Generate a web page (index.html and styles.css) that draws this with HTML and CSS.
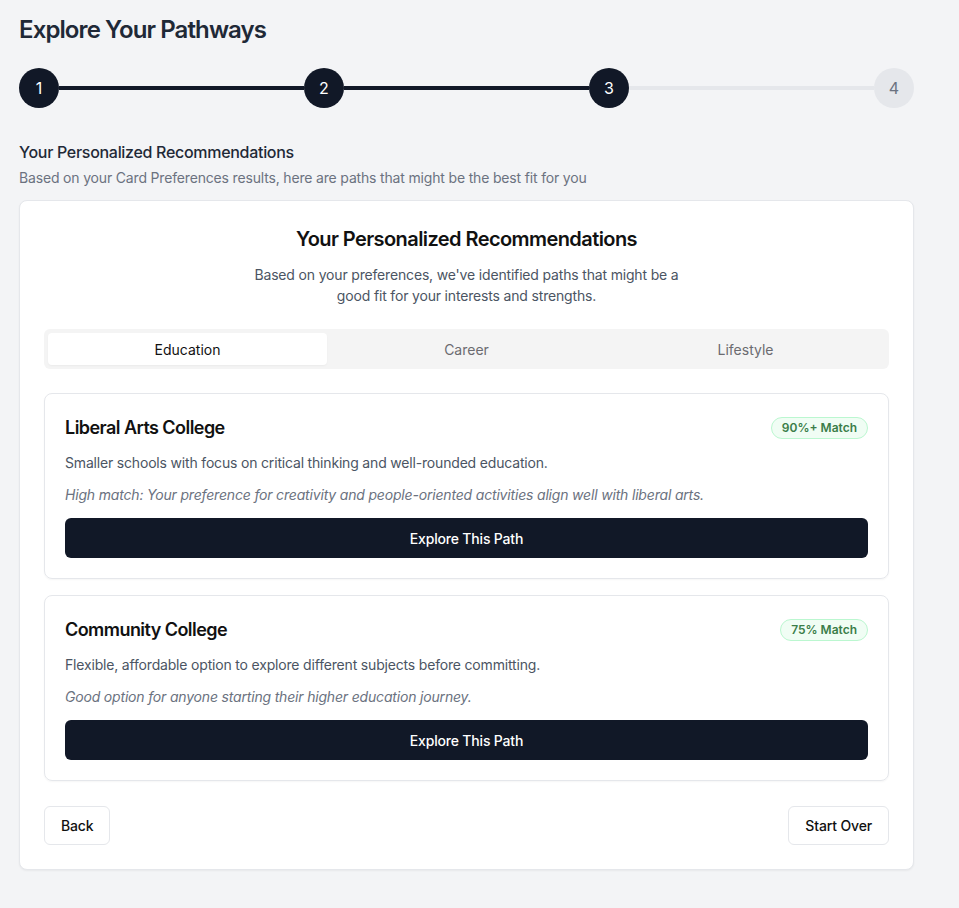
FILE: index.html
```html
<!DOCTYPE html>
<html lang="en">
<head>
<meta charset="utf-8">
<title>Explore Your Pathways</title>
<link rel="stylesheet" href="styles.css">
</head>
<body>
<main class="page">
  <h1 class="page-title">Explore Your Pathways</h1>

  <div class="stepper">
    <div class="step done">1</div>
    <div class="bar done"></div>
    <div class="step done">2</div>
    <div class="bar done"></div>
    <div class="step done">3</div>
    <div class="bar"></div>
    <div class="step">4</div>
  </div>

  <h2 class="section-title">Your Personalized Recommendations</h2>
  <p class="section-sub">Based on your Card Preferences results, here are paths that might be the best fit for you</p>

  <section class="panel">
    <h3 class="panel-title">Your Personalized Recommendations</h3>
    <p class="panel-sub">Based on your preferences, we've identified paths that might be a good fit for your interests and strengths.</p>

    <div class="tabs">
      <div class="tab active">Education</div>
      <div class="tab">Career</div>
      <div class="tab">Lifestyle</div>
    </div>

    <div class="cards">
      <article class="card">
        <div class="card-head">
          <h4 class="card-title">Liberal Arts College</h4>
          <span class="badge">90%+ Match</span>
        </div>
        <p class="card-desc">Smaller schools with focus on critical thinking and well-rounded education.</p>
        <p class="card-note">High match: Your preference for creativity and people-oriented activities align well with liberal arts.</p>
        <button class="btn-primary">Explore This Path</button>
      </article>

      <article class="card">
        <div class="card-head">
          <h4 class="card-title">Community College</h4>
          <span class="badge">75% Match</span>
        </div>
        <p class="card-desc">Flexible, affordable option to explore different subjects before committing.</p>
        <p class="card-note">Good option for anyone starting their higher education journey.</p>
        <button class="btn-primary">Explore This Path</button>
      </article>
    </div>

    <div class="actions">
      <button class="btn-outline">Back</button>
      <button class="btn-outline">Start Over</button>
    </div>
  </section>
</main>
</body>
</html>
```

FILE: styles.css
```css
* { box-sizing: border-box; }

html, body {
  margin: 0;
  padding: 0;
  background: #f3f4f6;
}

body {
  font-family: Inter, "Noto Sans", "Liberation Sans", sans-serif;
  color: #111827;
}

.page {
  width: 895px;
  margin-left: 19px;
  padding-top: 14px;
  padding-bottom: 38px;
}

.page-title {
  margin: 0;
  font-size: 24px;
  line-height: 32px;
  font-weight: 600;
  letter-spacing: -0.9px;
  color: #1f2937;
}

.stepper {
  display: flex;
  align-items: center;
  margin-top: 22px;
}

.step {
  width: 40px;
  height: 40px;
  flex: none;
  border-radius: 50%;
  background: #e5e7eb;
  color: #6b7280;
  display: flex;
  align-items: center;
  justify-content: center;
  font-size: 16px;
}

.step.done {
  background: #111827;
  color: #ffffff;
}

.bar {
  flex: 1;
  height: 4px;
  background: #e5e7eb;
}

.bar.done { background: #111827; }

.section-title {
  margin: 32px 0 0;
  font-size: 16px;
  line-height: 24px;
  font-weight: 500;
  letter-spacing: -0.3px;
  color: #1f2937;
}

.section-sub {
  margin: 4px 0 0;
  font-size: 14px;
  line-height: 20px;
  letter-spacing: -0.17px;
  color: #6b7280;
}

.panel {
  margin-top: 12px;
  background: #ffffff;
  border: 1px solid #e5e7eb;
  border-radius: 8px;
  box-shadow: 0 1px 2px rgba(0,0,0,0.05);
  padding: 24px;
}

.panel-title {
  margin: 0;
  text-align: center;
  font-size: 20px;
  line-height: 28px;
  font-weight: 600;
  letter-spacing: -0.58px;
  color: #111111;
}

.panel-sub {
  margin: 11px auto 0;
  max-width: 448px;
  text-align: center;
  font-size: 14px;
  line-height: 21px;
  letter-spacing: -0.17px;
  color: #4b5563;
}

.tabs {
  margin-top: 23px;
  display: grid;
  grid-template-columns: 1fr 1fr 1fr;
  height: 40px;
  padding: 4px;
  background: #f4f4f4;
  border-radius: 6px;
}

.tab {
  display: flex;
  align-items: center;
  justify-content: center;
  font-size: 14px;
  color: #6b6b70;
  border-radius: 4px;
}

.tab.active {
  background: #ffffff;
  color: #111111;
  box-shadow: 0 1px 2px rgba(0,0,0,0.04);
}

.cards {
  margin-top: 24px;
  display: flex;
  flex-direction: column;
  gap: 16px;
}

.card {
  border: 1px solid #e5e7eb;
  border-radius: 8px;
  padding: 20px;
  box-shadow: 0 1px 2px rgba(0,0,0,0.04);
}

.card-head {
  display: flex;
  align-items: center;
  justify-content: space-between;
}

.card-title {
  margin: 0;
  font-size: 18px;
  line-height: 28px;
  font-weight: 600;
  letter-spacing: -0.55px;
  color: #111111;
}

.badge {
  font-size: 12px;
  line-height: 16px;
  font-weight: 600;
  color: #3b7d49;
  background: #f0fdf4;
  border: 1px solid #bbf7d0;
  border-radius: 999px;
  padding: 2px 10px;
}

.card-desc {
  margin: 11px 0 0;
  font-size: 14px;
  line-height: 20px;
  letter-spacing: -0.18px;
  color: #4b5563;
}

.card-note {
  margin: 12px 0 0;
  font-size: 14px;
  line-height: 20px;
  font-style: italic;
  letter-spacing: -0.18px;
  color: #6b7280;
}

.btn-primary {
  display: block;
  width: 100%;
  margin-top: 13px;
  height: 40px;
  border: none;
  border-radius: 6px;
  background: #111827;
  color: #ffffff;
  font-family: inherit;
  font-size: 14px;
  font-weight: 500;
  letter-spacing: -0.18px;
}

.actions {
  margin-top: 25px;
  display: flex;
  justify-content: space-between;
}

.btn-outline {
  height: 39px;
  padding: 0 16px;
  background: #ffffff;
  border: 1px solid #e5e7eb;
  border-radius: 6px;
  color: #111111;
  font-family: inherit;
  font-size: 14px;
  font-weight: 500;
  letter-spacing: -0.15px;
}
```
